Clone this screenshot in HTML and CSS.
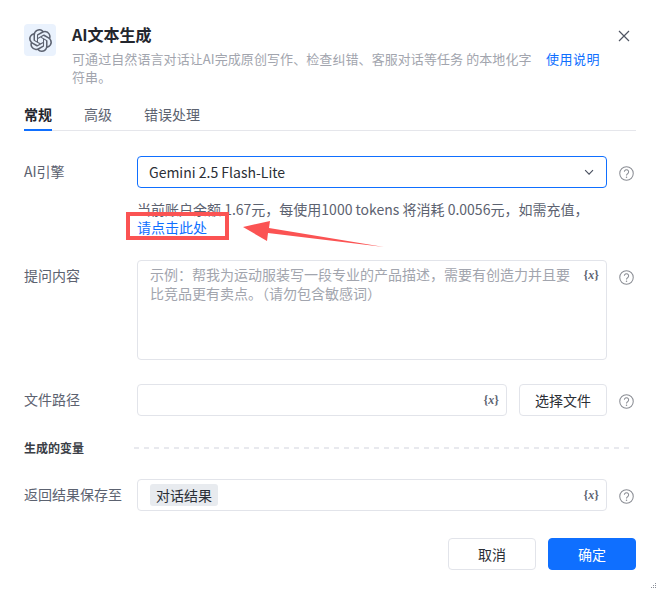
FILE: index.html
```html
<!DOCTYPE html>
<html lang="zh-CN">
<head>
<meta charset="utf-8">
<title>AI文本生成</title>
<link rel="stylesheet" href="styles.css">
</head>
<body>
<div class="dialog">
  <header class="head">
    <div class="logo">
      <svg viewBox="0 0 24 24" width="23" height="23"><path fill="currentColor" d="M22.2819 9.8211a5.9847 5.9847 0 0 0-.5157-4.9108 6.0462 6.0462 0 0 0-6.5098-2.9A6.0651 6.0651 0 0 0 4.9807 4.1818a5.9847 5.9847 0 0 0-3.9977 2.9 6.0462 6.0462 0 0 0 .7427 7.0966 5.98 5.98 0 0 0 .511 4.9107 6.051 6.051 0 0 0 6.5146 2.9001A5.9847 5.9847 0 0 0 13.2599 24a6.0557 6.0557 0 0 0 5.7718-4.2058 5.9894 5.9894 0 0 0 3.9977-2.9001 6.0557 6.0557 0 0 0-.7475-7.0729zm-9.022 12.6081a4.4755 4.4755 0 0 1-2.8764-1.0408l.1419-.0804 4.7783-2.7582a.7948.7948 0 0 0 .3927-.6813v-6.7369l2.02 1.1686a.071.071 0 0 1 .038.052v5.5826a4.504 4.504 0 0 1-4.4945 4.4944zm-9.6607-4.1254a4.4708 4.4708 0 0 1-.5346-3.0137l.142.0852 4.783 2.7582a.7712.7712 0 0 0 .7806 0l5.8428-3.3685v2.3324a.0804.0804 0 0 1-.0332.0615L9.74 19.9502a4.4992 4.4992 0 0 1-6.1408-1.6464zM2.3408 7.8956a4.485 4.485 0 0 1 2.3655-1.9728V11.6a.7664.7664 0 0 0 .3879.6765l5.8144 3.3543-2.0201 1.1685a.0757.0757 0 0 1-.071 0l-4.8303-2.7865A4.504 4.504 0 0 1 2.3408 7.872zm16.5963 3.8558L13.1038 8.364 15.1192 7.2a.0757.0757 0 0 1 .071 0l4.8303 2.7913a4.4944 4.4944 0 0 1-.6765 8.1042v-5.6772a.79.79 0 0 0-.407-.667zm2.0107-3.0231l-.142-.0852-4.7735-2.7818a.7759.7759 0 0 0-.7854 0L9.409 9.2297V6.8974a.0662.0662 0 0 1 .0284-.0615l4.8303-2.7866a4.4992 4.4992 0 0 1 6.6802 4.66zM8.3065 12.863l-2.02-1.1638a.0804.0804 0 0 1-.038-.0567V6.0742a4.4992 4.4992 0 0 1 7.3757-3.4537l-.142.0805L8.704 5.459a.7948.7948 0 0 0-.3927.6813zm1.0976-2.3654l2.602-1.4998 2.6069 1.4998v2.9994l-2.5974 1.4997-2.6067-1.4997Z"/></svg>
    </div>
    <div class="head-body">
      <div class="title-row">
        <h1 class="title">AI文本生成</h1>
        <svg class="close" viewBox="0 0 12 12" width="12" height="12"><path d="M1 1l10 10M11 1L1 11" fill="none" stroke="currentColor" stroke-width="1.2"/></svg>
      </div>
      <div class="desc-row">
        <p class="desc">可通过自然语言对话让AI完成原创写作、检查纠错、客服对话等任务 的本地化字符串。</p>
        <a class="link guide">使用说明</a>
      </div>
    </div>
  </header>

  <nav class="tabs">
    <span class="tab active">常规</span>
    <span class="tab">高级</span>
    <span class="tab">错误处理</span>
  </nav>

  <section class="form">
    <div class="row engine-row">
      <label class="label">AI引擎</label>
      <div class="field select">
        <span>Gemini 2.5 Flash-Lite</span>
        <svg viewBox="0 0 12 8" width="11" height="7"><path d="M1 1.2l4.5 4.6L10 1.2" fill="none" stroke="#4a5160" stroke-width="1.3"/></svg>
      </div>
      <svg class="help" viewBox="0 0 16 16" width="15" height="15"><circle cx="8" cy="8" r="7.2" fill="none" stroke="currentColor" stroke-width="1.1"/><path d="M5.7 6.2a2.3 2.3 0 1 1 3.5 2c-.8.5-1.2.9-1.2 1.8" fill="none" stroke="currentColor" stroke-width="1.1"/><circle cx="8" cy="12" r=".8" fill="currentColor"/></svg>
    </div>
    <p class="balance">当前账户余额 1.67元，每使用1000 tokens 将消耗 0.0056元，如需充值，<a class="link recharge">请点击此处</a></p>

    <div class="row prompt-row">
      <label class="label">提问内容</label>
      <div class="field textarea">
        <span class="placeholder">示例：帮我为运动服装写一段专业的产品描述，需要有创造力并且要比竞品更有卖点。（请勿包含敏感词）</span>
        <span class="var">{<i>x</i>}</span>
      </div>
      <svg class="help" viewBox="0 0 16 16" width="15" height="15"><circle cx="8" cy="8" r="7.2" fill="none" stroke="currentColor" stroke-width="1.1"/><path d="M5.7 6.2a2.3 2.3 0 1 1 3.5 2c-.8.5-1.2.9-1.2 1.8" fill="none" stroke="currentColor" stroke-width="1.1"/><circle cx="8" cy="12" r=".8" fill="currentColor"/></svg>
    </div>

    <div class="row path-row">
      <label class="label">文件路径</label>
      <div class="path-fields">
        <div class="field input"><span class="var">{<i>x</i>}</span></div>
        <button class="btn pick">选择文件</button>
      </div>
      <svg class="help" viewBox="0 0 16 16" width="15" height="15"><circle cx="8" cy="8" r="7.2" fill="none" stroke="currentColor" stroke-width="1.1"/><path d="M5.7 6.2a2.3 2.3 0 1 1 3.5 2c-.8.5-1.2.9-1.2 1.8" fill="none" stroke="currentColor" stroke-width="1.1"/><circle cx="8" cy="12" r=".8" fill="currentColor"/></svg>
    </div>

    <div class="divider">
      <span class="divider-text">生成的变量</span>
      <span class="dash"></span>
    </div>

    <div class="row result-row">
      <label class="label">返回结果保存至</label>
      <div class="field input tagged">
        <span class="tag">对话结果</span>
        <span class="var">{<i>x</i>}</span>
      </div>
      <svg class="help" viewBox="0 0 16 16" width="15" height="15"><circle cx="8" cy="8" r="7.2" fill="none" stroke="currentColor" stroke-width="1.1"/><path d="M5.7 6.2a2.3 2.3 0 1 1 3.5 2c-.8.5-1.2.9-1.2 1.8" fill="none" stroke="currentColor" stroke-width="1.1"/><circle cx="8" cy="12" r=".8" fill="currentColor"/></svg>
    </div>
  </section>

  <footer class="foot">
    <button class="btn cancel">取消</button>
    <button class="btn primary">确定</button>
  </footer>

  <div class="mark-box"></div>
  <svg class="mark-arrow" viewBox="0 0 150 30" width="150" height="30"><polygon points="3,7 30,1 29,8 144,27 28,13 27,21" fill="#fb5353"/></svg>
  <svg class="grip" viewBox="0 0 10 10" width="10" height="10"><g fill="#8a8f99"><rect x="7" y="1" width="1" height="1"/><rect x="5" y="3" width="1" height="1"/><rect x="7" y="3" width="1" height="1"/><rect x="3" y="5" width="1" height="1"/><rect x="5" y="5" width="1" height="1"/><rect x="7" y="5" width="1" height="1"/></g></svg>
</div>
</body>
</html>
```
FILE: styles.css
```css
* { box-sizing: border-box; }
html, body { margin: 0; padding: 0; background: #fff; }
body {
  font-family: "Noto Sans CJK SC", "Noto Sans", sans-serif;
  color: #2b2f36;
  overflow: hidden;
}
.dialog {
  position: relative;
  width: 660px;
  height: 595px;
  padding: 24px;
}
.head { display: flex; gap: 16px; }
.logo {
  width: 32px;
  height: 32px;
  flex: none;
  border-radius: 4px;
  background: #eaf2fd;
  color: #5c6270;
  display: flex;
  align-items: center;
  justify-content: center;
}
.head-body { flex: 1; min-width: 0; }
.title-row {
  display: flex;
  justify-content: space-between;
  align-items: flex-start;
  height: 20px;
}
.title { margin: 0; font-size: 16px; line-height: 20px; font-weight: 700; color: #23262d; }
.close { color: #4f5562; margin-right: 6px; margin-top: 6px; }
.desc-row { display: flex; gap: 14px; margin-top: 6px; }
.desc { margin: 0; width: 460px; font-size: 13px; line-height: 18px; color: #a2a5ae; letter-spacing: .08px; }
.link { color: #0f6fff; }
.guide { font-size: 13px; line-height: 18px; white-space: nowrap; letter-spacing: .5px; }
.tabs {
  display: flex;
  gap: 32px;
  margin-top: 17px;
  border-bottom: 1px solid #e5e6eb;
  height: 28px;
}
.tab {
  font-size: 14px;
  line-height: 22px;
  color: #5c6270;
  height: 28px;
}
.tab.active {
  color: #23262d;
  font-weight: 700;
  border-bottom: 2px solid #0f6fff;
}
.form { margin-top: 25px; }
.row {
  display: grid;
  grid-template-columns: 113px 470px 27px;
  align-items: start;
}
.label {
  font-size: 14px;
  line-height: 30px;
  color: #5c6270;
}
.help { color: #8a8d94; margin: 10px 0 0 12px; width: 15px; overflow: visible; }
.field {
  border: 1px solid #e2e4ea;
  border-radius: 4px;
  background: #fff;
  font-size: 14px;
}
.select {
  height: 32px;
  border-color: #0f6fff;
  padding: 0 11px;
  display: flex;
  align-items: center;
  justify-content: space-between;
  color: #2b2f36;
  font-size: 14px;
}
.balance {
  margin: 12px 0 0 113px;
  width: 470px;
  font-size: 14px;
  line-height: 18px;
  color: #5c6270;
}
.recharge { display: block; }
.prompt-row { margin-top: 24px; }
.textarea {
  height: 100px;
  padding: 4px 7px 0 12px;
  display: flex;
  align-items: flex-start;
  justify-content: space-between;
  gap: 8px;
}
.placeholder {
  font-size: 14px;
  line-height: 19px;
  color: #a2a5ae;
  width: 424px;
}
.var {
  flex: none;
  font-family: "Liberation Serif", serif;
  font-size: 12px;
  font-weight: 700;
  line-height: 30px;
  color: #5c6270;
  margin-top: -5px;
}
.var i { font-style: italic; }
.path-row { margin-top: 24px; }
.path-fields { display: flex; gap: 12px; }
.input {
  height: 32px;
  flex: 1;
  padding: 0 7px 0 12px;
  display: flex;
  align-items: center;
  justify-content: flex-end;
}
.input .var { margin-top: 0; }
.btn {
  height: 32px;
  border: 1px solid #e2e4ea;
  border-radius: 4px;
  background: #fff;
  font: inherit;
  font-size: 14px;
  color: #2b2f36;
  padding: 0;
}
.pick { width: 88px; }
.divider {
  display: flex;
  align-items: center;
  gap: 50px;
  height: 18px;
  margin-top: 23px;
}
.divider-text { font-size: 12px; line-height: 18px; font-weight: 700; color: #3a3e46; white-space: nowrap; }
.dash {
  width: 496px;
  height: 2px;
  background: repeating-linear-gradient(90deg, #e8e9ee 0 5px, transparent 5px 10px);
}
.result-row { margin-top: 22px; }
.tagged { justify-content: space-between; padding-left: 12px; }
.tag {
  height: 22px;
  line-height: 22px;
  padding: 0 6px;
  border-radius: 3px;
  background: #e8ebef;
  font-size: 14px;
  color: #2b2f36;
}
.foot {
  display: flex;
  justify-content: flex-end;
  gap: 12px;
  margin-top: 27px;
}
.foot .btn { width: 88px; }
.primary { background: #0f6fff; border-color: #0f6fff; color: #fff; }
.mark-box {
  position: absolute;
  left: 126px;
  top: 212px;
  width: 103px;
  height: 28px;
  border: 4px solid #fb5353;
}
.mark-arrow { position: absolute; left: 240px; top: 220px; }
.grip { position: absolute; right: 2px; bottom: 3px; }
```
